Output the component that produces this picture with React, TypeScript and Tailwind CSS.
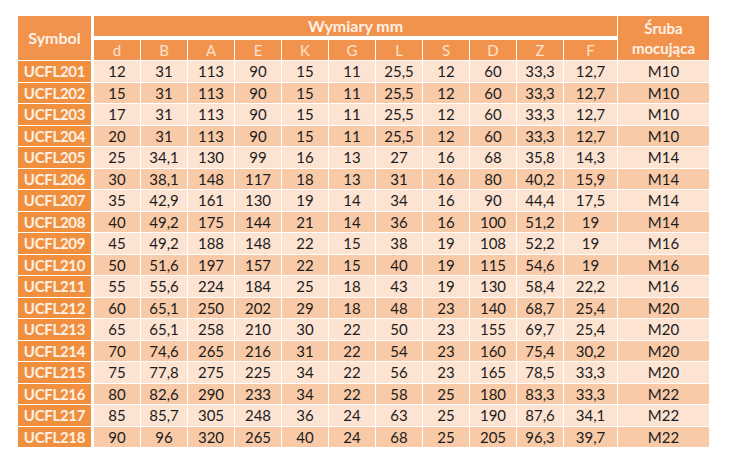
import React from "react";

const rows: string[][] = [
  ["UCFL201", "12", "31", "113", "90", "15", "11", "25,5", "12", "60", "33,3", "12,7", "M10"],
  ["UCFL202", "15", "31", "113", "90", "15", "11", "25,5", "12", "60", "33,3", "12,7", "M10"],
  ["UCFL203", "17", "31", "113", "90", "15", "11", "25,5", "12", "60", "33,3", "12,7", "M10"],
  ["UCFL204", "20", "31", "113", "90", "15", "11", "25,5", "12", "60", "33,3", "12,7", "M10"],
  ["UCFL205", "25", "34,1", "130", "99", "16", "13", "27", "16", "68", "35,8", "14,3", "M14"],
  ["UCFL206", "30", "38,1", "148", "117", "18", "13", "31", "16", "80", "40,2", "15,9", "M14"],
  ["UCFL207", "35", "42,9", "161", "130", "19", "14", "34", "16", "90", "44,4", "17,5", "M14"],
  ["UCFL208", "40", "49,2", "175", "144", "21", "14", "36", "16", "100", "51,2", "19", "M14"],
  ["UCFL209", "45", "49,2", "188", "148", "22", "15", "38", "19", "108", "52,2", "19", "M16"],
  ["UCFL210", "50", "51,6", "197", "157", "22", "15", "40", "19", "115", "54,6", "19", "M16"],
  ["UCFL211", "55", "55,6", "224", "184", "25", "18", "43", "19", "130", "58,4", "22,2", "M16"],
  ["UCFL212", "60", "65,1", "250", "202", "29", "18", "48", "23", "140", "68,7", "25,4", "M20"],
  ["UCFL213", "65", "65,1", "258", "210", "30", "22", "50", "23", "155", "69,7", "25,4", "M20"],
  ["UCFL214", "70", "74,6", "265", "216", "31", "22", "54", "23", "160", "75,4", "30,2", "M20"],
  ["UCFL215", "75", "77,8", "275", "225", "34", "22", "56", "23", "165", "78,5", "33,3", "M20"],
  ["UCFL216", "80", "82,6", "290", "233", "34", "22", "58", "25", "180", "83,3", "33,3", "M22"],
  ["UCFL217", "85", "85,7", "305", "248", "36", "24", "63", "25", "190", "87,6", "34,1", "M22"],
  ["UCFL218", "90", "96", "320", "265", "40", "24", "68", "25", "205", "96,3", "39,7", "M22"],
];

const subs = ["d", "B", "A", "E", "K", "G", "L", "S", "D", "Z", "F"];

export default function App() {
  return (
    <div
      className="w-[730px] h-[470px] bg-white pl-[18px] pt-[16px]"
      style={{ fontFamily: "Lato, 'Open Sans', sans-serif" }}
    >
      <div className="grid grid-cols-[75px_repeat(10,46px)_53px_91px] grid-rows-[23px_20px_repeat(18,20.5px)] gap-x-px gap-y-px w-fit">
        <div className="row-span-2 mr-[2px] h-[44px] bg-[#f2934d] flex items-center justify-center text-[16px] font-bold text-[#fdf1e6]">
          Symbol
        </div>
        <div className="col-span-11 h-[20px] bg-[#f2934d] flex items-center justify-center text-[16px] font-bold text-[#fdf1e6]">
          Wymiary mm
        </div>
        <div className="row-span-2 h-[44px] bg-[#f2934d] flex flex-col items-center justify-center text-[15px] font-bold leading-[20px] text-[#fdf1e6]">
          <span>Śruba</span>
          <span>mocująca</span>
        </div>
        {subs.map((s) => (
          <div
            key={s}
            className="bg-[#f2934d] flex items-center justify-center text-[15px] text-[#fde3cf]"
          >
            {s}
          </div>
        ))}
        {rows.map((r, i) => (
          <React.Fragment key={r[0]}>
            <div className="mr-[2px] bg-[#f0903f] flex items-center justify-center text-[15px] tracking-[-0.3px] font-bold text-[#fdf1e6]">
              {r[0]}
            </div>
            {r.slice(1).map((v, j) => (
              <div
                key={j}
                className={`flex items-center justify-center text-[15px] text-[#1c1c1c] ${
                  i % 2 === 0 ? "bg-[#fce3d2]" : "bg-[#f9caa7]"
                }`}
              >
                {v}
              </div>
            ))}
          </React.Fragment>
        ))}
      </div>
    </div>
  );
}
